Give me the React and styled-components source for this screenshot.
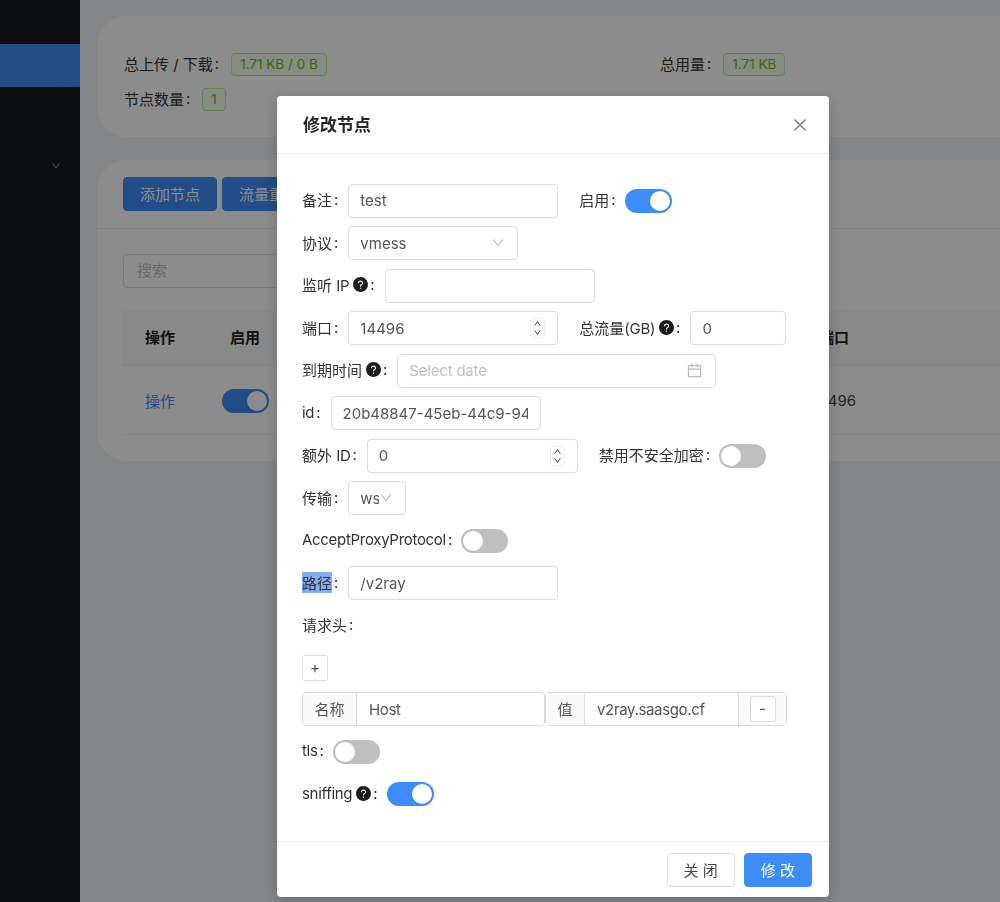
import React from "react"
import styled, { createGlobalStyle } from "styled-components"
import {
  AiFillQuestionCircle,
  AiOutlineCalendar,
  AiOutlineClose,
  AiOutlineDown,
  AiOutlineUp,
} from "react-icons/ai"

const BLUE = "#3e8cf7"
const BORDER = "#dcdcdc"

const GlobalStyle = createGlobalStyle`
  html, body {
    margin: 0;
    height: 100%;
    overflow: hidden;
    background: #f0f2f5;
    font-family: Inter, "Noto Sans CJK SC", sans-serif;
    font-size: 15px;
    color: #333;
  }
`

const Page = styled.div`
  display: flex;
  height: 902px;
  overflow: hidden;
`
const Sider = styled.div`
  flex: none;
  width: 80px;
  padding-top: 44px;
  background: #161a21;
`
const MenuActive = styled.div`
  height: 43px;
  background: #3c8cf0;
`
const MenuArrow = styled.div`
  display: flex;
  justify-content: flex-end;
  align-items: center;
  height: 30px;
  margin-top: 64px;
  padding-right: 19px;
  color: #8a8d92;
  font-size: 10px;
`
const Main = styled.div`
  flex: 1;
  min-width: 0;
  padding: 16px 0 0 17px;
  overflow: hidden;
`
const Card = styled.div`
  width: 1100px;
  margin-bottom: 23px;
  background: #fff;
  border-radius: 30px;
`
const StatsCard = styled(Card)`
  height: 121px;
  box-sizing: border-box;
  padding: 37px 27px 0;
`
const StatRow = styled.div`
  display: flex;
  align-items: center;
  height: 23px;
  margin-bottom: 12px;
`
const StatItem = styled.div`
  display: flex;
  flex: none;
  align-items: center;
  width: 536px;
`
const Tag = styled.span`
  margin-left: 2px;
  padding: 0 8px;
  height: 21px;
  line-height: 21px;
  border: 1px solid #b7eb8f;
  border-radius: 4px;
  background: #f6ffed;
  color: #52c41a;
  font-size: 13.5px;
`
const TableCard = styled(Card)`
  height: 301px;
`
const Toolbar = styled.div`
  display: flex;
  gap: 5px;
  height: 69px;
  box-sizing: border-box;
  padding: 17px 26px 0;
  border-bottom: 1px solid #eee;
`
const Button = styled.button`
  height: 34px;
  padding: 0 16px 2px;
  border: 1px solid ${(p) => (p.$primary ? BLUE : BORDER)};
  border-radius: 4px;
  background: ${(p) => (p.$primary ? BLUE : "#fff")};
  color: ${(p) => (p.$primary ? "#fff" : "#444")};
  font: inherit;
`
const TableBody = styled.div`
  padding: 25px 26px 0;
`
const Search = styled.div`
  width: 300px;
  height: 34px;
  box-sizing: border-box;
  margin-bottom: 22px;
  padding-left: 13px;
  border: 1px solid ${BORDER};
  border-radius: 4px;
  line-height: 32px;
  color: #bfbfbf;
`
const TableRow = styled.div`
  display: grid;
  grid-template-columns: 74px 96px 496px 90px 1fr;
  align-items: center;
  box-sizing: border-box;
  height: ${(p) => p.$h}px;
  border-bottom: 1px solid #efefef;
  background: ${(p) => (p.$head ? "#fafafa" : "transparent")};
  font-weight: ${(p) => (p.$head ? 600 : 400)};
  color: ${(p) => (p.$head ? "#222" : "#444")};
  text-align: center;
`
const HeadCell = styled.span`
  margin-top: -2px;
`
const LinkCell = styled.span`
  color: ${BLUE};
`
const Mask = styled.div`
  position: fixed;
  inset: 0;
  background: rgba(0, 0, 0, 0.45);
`
const Modal = styled.div`
  position: absolute;
  left: 277px;
  top: 96px;
  width: 552px;
  height: 801px;
  display: flex;
  flex-direction: column;
  background: #fff;
  border-radius: 4px;
  box-shadow: 0 4px 16px rgba(0, 0, 0, 0.2);
`
const ModalHeader = styled.div`
  display: flex;
  justify-content: space-between;
  align-items: center;
  height: 57px;
  padding: 0 20px 0 26px;
  border-bottom: 1px solid #ececec;
  font-size: 17px;
  font-weight: 600;
  color: #262626;
`
const ModalTitle = styled.span`
  margin-top: -2px;
`
const CloseIcon = styled(AiOutlineClose)`
  font-size: 18px;
  color: #808080;
`
const ModalBody = styled.div`
  flex: 1;
  padding: 29.9px 0 0 25px;
`
const ModalFooter = styled.div`
  display: flex;
  justify-content: flex-end;
  gap: 9px;
  padding: 11px 17px 10px;
  border-top: 1px solid #ececec;
`
const FormRow = styled.div`
  display: flex;
  align-items: center;
  height: 34px;
  margin-bottom: 8.5px;
`
const AddRow = styled(FormRow)`
  margin-bottom: 6.9px;
`
const FormItem = styled.div`
  display: flex;
  align-items: center;
  margin-right: 21px;
`
const Label = styled.span`
  display: inline-flex;
  align-items: center;
  margin-top: -2px;
  white-space: nowrap;
  color: #333;
  &::after {
    content: ":";
    margin: 0 10px 0 2px;
  }
`
const Latin = styled.span`
  letter-spacing: -0.3px;
`
const Selected = styled.span`
  background: #84aef0;
`
const Help = styled(AiFillQuestionCircle)`
  margin: 0 -1px 0 3px;
  font-size: 17px;
  color: #1c1c1c;
`
const Field = styled.div`
  display: flex;
  align-items: center;
  flex: none;
  width: ${(p) => p.$w}px;
  height: 34px;
  box-sizing: border-box;
  padding: 0 12px 0 11px;
  border: 1px solid ${BORDER};
  border-radius: 4px;
  background: #fff;
  color: ${(p) => (p.$muted ? "#bfbfbf" : "#555")};
  letter-spacing: ${(p) => (p.$muted ? "-0.2px" : "0")};
`
const FieldText = styled.span`
  flex: 1;
  min-width: 0;
  overflow: hidden;
  white-space: nowrap;
`
const SelectArrow = styled(AiOutlineDown)`
  flex: none;
  font-size: 14px;
  color: #bbb;
`
const CalendarIcon = styled(AiOutlineCalendar)`
  flex: none;
  font-size: 17px;
  color: #bbb;
`
const Stepper = styled.span`
  display: flex;
  flex-direction: column;
  align-items: center;
  justify-content: center;
  flex: none;
  width: 13px;
  height: 18px;
  border-radius: 4px;
  border: 1px solid #eee;
  color: #333;
  font-size: 9px;
  line-height: 8px;
`
const Switch = styled.span`
  display: flex;
  justify-content: ${(p) => (p.$on ? "flex-end" : "flex-start")};
  align-items: center;
  flex: none;
  width: 47px;
  height: 24px;
  box-sizing: border-box;
  margin-left: -1px;
  padding: 2px;
  border-radius: 12px;
  background: ${(p) => (p.$on ? BLUE : "#bfbfbf")};
  &::after {
    content: "";
    width: 20px;
    height: 20px;
    border-radius: 50%;
    background: #fff;
  }
`
const CellSwitch = styled(Switch)`
  margin: 2px auto 0;
`
const SmallButton = styled.button`
  width: 26px;
  height: 26px;
  padding: 0;
  border: 1px solid ${BORDER};
  border-radius: 3px;
  background: #fff;
  color: #555;
  font: inherit;
  line-height: 22px;
`
const Group = styled.div`
  display: flex;
  align-items: stretch;
  flex: none;
  width: ${(p) => p.$w}px;
  height: 34px;
  box-sizing: border-box;
  border: 1px solid ${BORDER};
  border-radius: 4px;
  background: #fff;
  color: #555;
`
const Addon = styled.div`
  display: flex;
  align-items: center;
  justify-content: center;
  flex: none;
  box-sizing: border-box;
  width: ${(p) => p.$w}px;
  padding-bottom: ${(p) => (p.$side === "left" ? 2 : 0)}px;
  background: #fafafa;
  border-left: ${(p) => (p.$side === "right" ? `1px solid ${BORDER}` : "none")};
  border-right: ${(p) => (p.$side === "left" ? `1px solid ${BORDER}` : "none")};
`
const GroupValue = styled.div`
  flex: 1;
  display: flex;
  align-items: center;
  padding-left: 12px;
  letter-spacing: -0.35px;
`

const Stepped = () => (
  <Stepper>
    <AiOutlineUp />
    <AiOutlineDown />
  </Stepper>
)

const Form = () => (
  <ModalBody>
    <FormRow>
      <FormItem>
        <Label>备注</Label>
        <Field $w={210}>test</Field>
      </FormItem>
      <FormItem>
        <Label>启用</Label>
        <Switch $on />
      </FormItem>
    </FormRow>
    <FormRow>
      <FormItem>
        <Label>协议</Label>
        <Field $w={170}>
          <FieldText>vmess</FieldText>
          <SelectArrow />
        </Field>
      </FormItem>
    </FormRow>
    <FormRow>
      <FormItem>
        <Label>
          <span>
            监听 <Latin>IP</Latin>
          </span>
          <Help />
        </Label>
        <Field $w={210} />
      </FormItem>
    </FormRow>
    <FormRow>
      <FormItem>
        <Label>端口</Label>
        <Field $w={210}>
          <FieldText>14496</FieldText>
          <Stepped />
        </Field>
      </FormItem>
      <FormItem>
        <Label>
          <span>
            总流量<Latin>(GB)</Latin>
          </span>
          <Help />
        </Label>
        <Field $w={96}>0</Field>
      </FormItem>
    </FormRow>
    <FormRow>
      <FormItem>
        <Label>
          到期时间
          <Help />
        </Label>
        <Field $w={319} $muted>
          <FieldText>Select date</FieldText>
          <CalendarIcon />
        </Field>
      </FormItem>
    </FormRow>
    <FormRow>
      <FormItem>
        <Label>
          <Latin>id</Latin>
        </Label>
        <Field $w={210}>
          <FieldText>20b48847-45eb-44c9-9401-6a2c1f3e7d10</FieldText>
        </Field>
      </FormItem>
    </FormRow>
    <FormRow>
      <FormItem>
        <Label>
          <span>
            额外 <Latin>ID</Latin>
          </span>
        </Label>
        <Field $w={211}>
          <FieldText>0</FieldText>
          <Stepped />
        </Field>
      </FormItem>
      <FormItem>
        <Label>禁用不安全加密</Label>
        <Switch />
      </FormItem>
    </FormRow>
    <FormRow>
      <FormItem>
        <Label>传输</Label>
        <Field $w={58}>
          <FieldText>ws</FieldText>
          <SelectArrow />
        </Field>
      </FormItem>
    </FormRow>
    <FormRow>
      <FormItem>
        <Label>
          <Latin>AcceptProxyProtocol</Latin>
        </Label>
        <Switch />
      </FormItem>
    </FormRow>
    <FormRow>
      <FormItem>
        <Label>
          <Selected>路径</Selected>
        </Label>
        <Field $w={210}>/v2ray</Field>
      </FormItem>
    </FormRow>
    <FormRow>
      <Label>请求头</Label>
    </FormRow>
    <AddRow>
      <SmallButton>+</SmallButton>
    </AddRow>
    <FormRow>
      <Group $w={243}>
        <Addon $w={54} $side="left">名称</Addon>
        <GroupValue>Host</GroupValue>
      </Group>
      <Group $w={242}>
        <Addon $w={39} $side="left">值</Addon>
        <GroupValue>v2ray.saasgo.cf</GroupValue>
        <Addon $w={48} $side="right">
          <SmallButton>-</SmallButton>
        </Addon>
      </Group>
    </FormRow>
    <FormRow>
      <FormItem>
        <Label>
          <Latin>tls</Latin>
        </Label>
        <Switch />
      </FormItem>
    </FormRow>
    <FormRow>
      <FormItem>
        <Label>
          <Latin>sniffing</Latin>
          <Help />
        </Label>
        <Switch $on />
      </FormItem>
    </FormRow>
  </ModalBody>
)

const App = () => (
  <>
    <GlobalStyle />
    <Page>
      <Sider>
        <MenuActive />
        <MenuArrow>
          <AiOutlineDown />
        </MenuArrow>
      </Sider>
      <Main>
        <StatsCard>
          <StatRow>
            <StatItem>
              <Label>总上传 / 下载</Label>
              <Tag>1.71 KB / 0 B</Tag>
            </StatItem>
            <StatItem>
              <Label>总用量</Label>
              <Tag>1.71 KB</Tag>
            </StatItem>
          </StatRow>
          <StatRow>
            <StatItem>
              <Label>节点数量</Label>
              <Tag>1</Tag>
            </StatItem>
          </StatRow>
        </StatsCard>
        <TableCard>
          <Toolbar>
            <Button $primary>添加节点</Button>
            <Button $primary>流量重置</Button>
          </Toolbar>
          <TableBody>
            <Search>搜索</Search>
            <TableRow $head $h={56}>
              <HeadCell>操作</HeadCell>
              <HeadCell>启用</HeadCell>
              <span />
              <HeadCell>端口</HeadCell>
            </TableRow>
            <TableRow $h={69}>
              <LinkCell>操作</LinkCell>
              <CellSwitch $on />
              <span />
              <span>14496</span>
            </TableRow>
          </TableBody>
        </TableCard>
      </Main>
    </Page>
    <Mask>
      <Modal>
        <ModalHeader>
          <ModalTitle>修改节点</ModalTitle>
          <CloseIcon />
        </ModalHeader>
        <Form />
        <ModalFooter>
          <Button>关 闭</Button>
          <Button $primary>修 改</Button>
        </ModalFooter>
      </Modal>
    </Mask>
  </>
)

export default App
